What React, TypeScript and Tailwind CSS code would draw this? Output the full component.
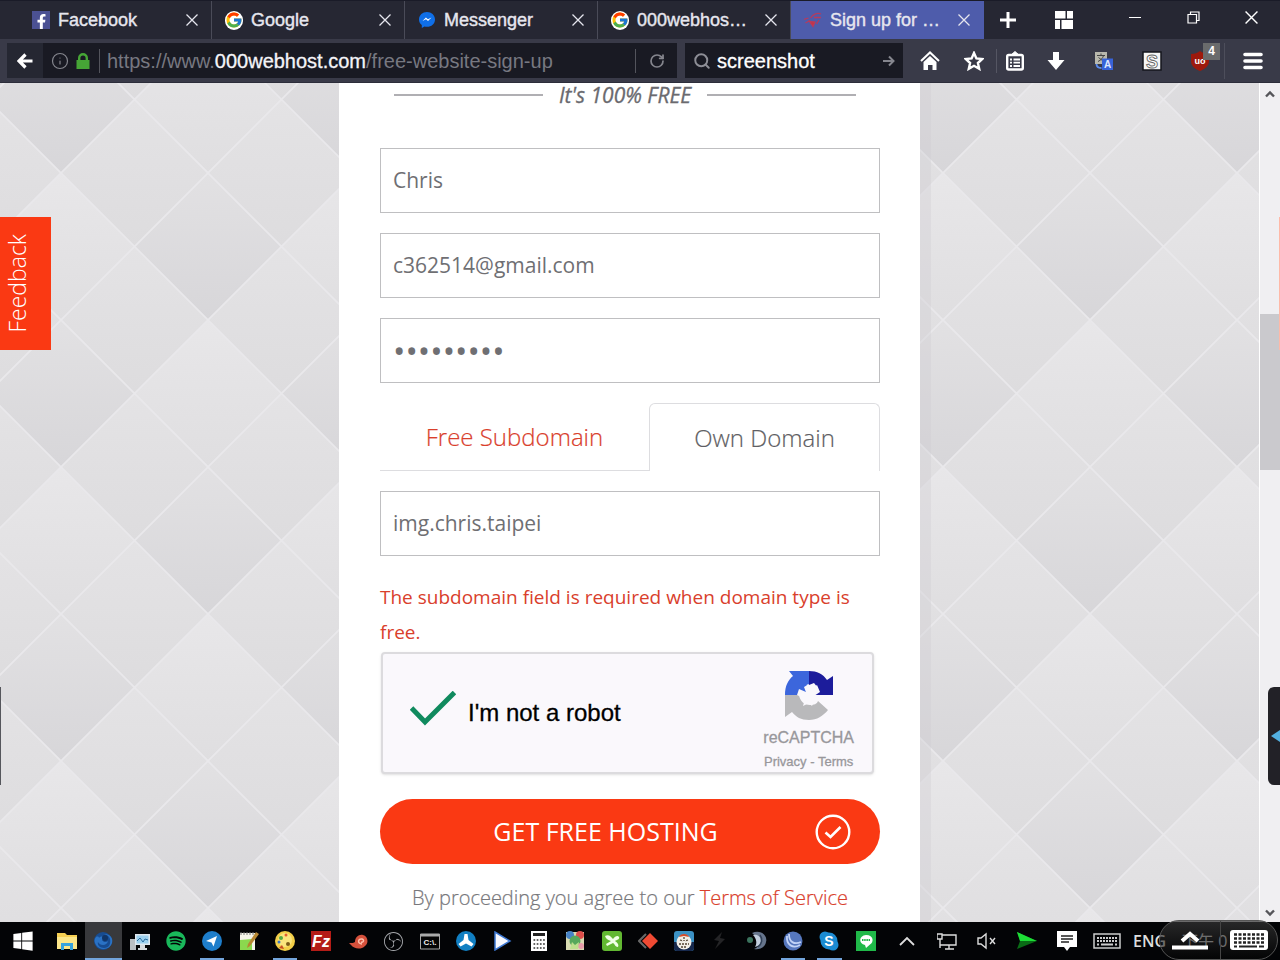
import { useState } from 'react';
import type { ReactNode } from 'react';
import { FcGoogle } from 'react-icons/fc';
import { FaFacebookF, FaSpotify, FaWindows } from 'react-icons/fa';
import { SiObsstudio } from 'react-icons/si';
import { Info, RotateCw, Search } from 'lucide-react';

type BrowserTab = { title: string; icon: ReactNode; active?: boolean };
type TaskItem = { name: string; icon: ReactNode; running?: boolean; active?: boolean };

const CloseIcon = ({ className = 'size-3' }: { className?: string }) => (
    <svg viewBox="0 0 12 12" className={className} stroke="currentColor" strokeWidth="1.3" fill="none">
        <path d="M0.5 0.5 11.5 11.5M11.5 0.5 0.5 11.5" />
    </svg>
);

const FacebookIcon = () => (
    <span className="flex size-[18px] items-end justify-center bg-[#4b5193]">
        <FaFacebookF className="size-[15px] text-white" />
    </span>
);

const GoogleIcon = () => (
    <span className="grid size-[19px] place-items-center rounded-full bg-white">
        <FcGoogle className="size-[18px]" />
    </span>
);

const MessengerIcon = () => (
    <svg viewBox="0 0 18 18" className="size-[18px]">
        <path d="M9 1C4.600 1 1 4.200 1 8.400c0 2.300 1.100 4.200 2.800 5.600V17l2.700-1.500c.8.2 1.600.3 2.500.3 4.400 0 8-3.200 8-7.400S13.400 1 9 1z" fill="#0f6fe8" />
        <path d="m4.500 10 3.400-3.500 2 1.800 3.600-1.800-3.500 3.600-2-1.800z" fill="#fff" />
    </svg>
);

const WebhostIcon = () => (
    <svg viewBox="0 0 18 18" className="size-[18px]" fill="none" stroke="#b83a5c" strokeWidth="1.300">
        <path d="M0 8.500 4.500 7M1.500 12 6 9.500M6.500 7C9 3 14 1.500 17 3M10 6.500h7M15 9l-2.500 4" />
        <path d="M5.500 10.500l5.500.5-2 4.500z" fill="#c8343f" />
    </svg>
);

const tabs: BrowserTab[] = [
    { title: 'Facebook', icon: <FacebookIcon /> },
    { title: 'Google', icon: <GoogleIcon /> },
    { title: 'Messenger', icon: <MessengerIcon /> },
    { title: '000webhos…', icon: <GoogleIcon /> },
    { title: 'Sign up for …', icon: <WebhostIcon />, active: true },
];

function TabStrip() {
    return (
        <div className="flex h-[39px] items-stretch border-t border-[#1a1b28] bg-[#262733] pl-[19px] text-[#e6e6ee]">
            {tabs.map((tab) => (
                <div
                    key={tab.title}
                    className={`flex w-[193px] shrink-0 items-center gap-2 border-r px-[13px] ${tab.active ? 'border-[#4e5cab] bg-[#4e5cab]' : 'border-[#4a4b58]'}`}
                >
                    <span className="flex w-[18px] shrink-0 justify-center">{tab.icon}</span>
                    <span className="flex-1 whitespace-nowrap text-lg [-webkit-text-stroke:0.4px_currentColor]">{tab.title}</span>
                    <button aria-label={`Close ${tab.title}`}><CloseIcon /></button>
                </div>
            ))}
            <button aria-label="New tab" className="grid w-12 place-items-center">
                <svg viewBox="0 0 16 16" className="size-4" stroke="#fff" strokeWidth="3"><path d="M8 0v16M0 8h16" /></svg>
            </button>
            <button aria-label="Tab groups" className="grid w-16 place-items-center">
                <svg viewBox="0 0 18 18" className="size-[18px]" fill="#fff">
                    <path d="M0 0h10.500v7.500H0zM12 0h6v7.500h-6zM0 9h5v9H0zM6.500 9H18v9H6.500z" />
                </svg>
            </button>
            <div className="ml-auto flex items-start text-white">
                <button aria-label="Minimize" className="grid h-8 w-[58px] place-items-center">
                    <svg viewBox="0 0 12 12" className="size-3" stroke="currentColor"><path d="M0 6.500h12" /></svg>
                </button>
                <button aria-label="Restore" className="grid h-8 w-[58px] place-items-center">
                    <svg viewBox="0 0 13 13" className="size-[13px]" fill="none" stroke="currentColor" strokeWidth="1.200">
                        <path d="M1 3.500h8.500V12H1zM3.500 3.500V1H12v8.500H9.500" />
                    </svg>
                </button>
                <button aria-label="Close window" className="grid h-8 w-[58px] place-items-center"><CloseIcon className="size-[13px]" /></button>
            </div>
        </div>
    );
}

function Toolbar() {
    return (
        <div className="flex h-11 items-center border-b border-[#2c2d3a] bg-[#393a48] pl-[7px] text-white">
            <div className="flex h-[35px] flex-1 items-center bg-[#191a23]">
                <button aria-label="Back" className="grid h-full w-9 place-items-center bg-[#252732]">
                    <svg viewBox="0 0 16 16" className="size-4" fill="none" stroke="#fff" strokeWidth="3.200"><path d="M15.500 8H3M8.500 1.500 2 8l6.500 6.500" /></svg>
                </button>
                <Info className="ml-2 size-[18px] text-[#85868e]" strokeWidth={1.6} />
                <svg viewBox="0 0 14 16" className="ml-[7px] h-4 w-[14px]">
                    <path d="M0.500 7h13v9h-13z" fill="#46a536" />
                    <path d="M3.200 8V5a3.800 3.800 0 0 1 7.600 0v3" fill="none" stroke="#46a536" strokeWidth="2.400" />
                </svg>
                <span className="ml-[9px] h-6 w-px bg-[#53545c]" />
                <div className="min-w-0 flex-1 overflow-hidden whitespace-nowrap pl-[7px] text-xl text-[#777881]">
                    https://www.<span className="text-[#f4f4f8] [-webkit-text-stroke:0.3px_currentColor]">000webhost.com</span>/free-website-sign-up
                </div>
                <span className="h-6 w-px bg-[#53545c]" />
                <button aria-label="Reload" className="grid h-full w-[41px] place-items-center text-[#85868e]">
                    <RotateCw className="size-4" strokeWidth={2.6} />
                </button>
            </div>
            <label className="ml-2 flex h-[35px] w-[218px] items-center bg-[#191a23] px-2">
                <Search className="size-[18px] shrink-0 text-[#8d8e96]" strokeWidth={2.6} />
                <input aria-label="Search" defaultValue="screenshot" className="ml-1.5 min-w-0 flex-1 bg-transparent text-xl outline-none [-webkit-text-stroke:0.3px_currentColor]" />
                <svg viewBox="0 0 12 12" className="size-3" fill="none" stroke="#85868e" strokeWidth="2"><path d="M0 6h10M6 1.500 10.500 6 6 10.500" /></svg>
            </label>
            <button aria-label="Home" className="ml-[5px] grid w-11 place-items-center">
                <svg viewBox="0 0 20 20" className="size-5">
                    <path d="M1 10 10 1.500 19 10" fill="none" stroke="#fff" strokeWidth="2" />
                    <path d="M3.500 11 10 5l6.500 6v8h-4v-5h-4.500v5h-4.500z" fill="#fff" />
                </svg>
            </button>
            <button aria-label="Bookmark" className="grid w-11 place-items-center">
                <svg viewBox="0 0 20 20" className="size-5" fill="none" stroke="#fff" strokeWidth="2.400">
                    <path d="m10 2 2.400 5.400 5.900.6-4.400 4 1.300 5.800L10 14.800l-5.200 3L6.100 12 1.700 8l5.900-.6z" />
                </svg>
            </button>
            <button aria-label="Bookmarks list" className="grid h-6 w-9 place-items-center border-l border-[#555663]">
                <svg viewBox="0 0 18 20" className="h-5 w-[18px]" fill="none" stroke="#fff">
                    <rect x="1.200" y="4" width="15.600" height="14.500" rx="1.500" strokeWidth="2.400" />
                    <path d="M5 4 9 0.500 13 4z" fill="#fff" />
                    <path d="M4 8.500h2M7.500 8.500H14M4 11.700h2M7.500 11.700H14M4 15h2M7.500 15H14" strokeWidth="1.800" />
                </svg>
            </button>
            <button aria-label="Downloads" className="grid w-12 place-items-center">
                <svg viewBox="0 0 18 18" className="size-[18px]" fill="#fff"><path d="M6 0h6v8h5.500L9 18 .5 8H6z" /></svg>
            </button>
            <button aria-label="Translate" className="grid w-12 place-items-center">
                <svg viewBox="0 0 18 18" className="size-[18px]">
                    <path d="M0 0h12v12H0z" fill="#b9b8ad" />
                    <path d="M2 3.500h8M6 1.500v2M3 9.500C6 8 8 6 8.500 3.500M3.500 5.500 8 9" stroke="#444" fill="none" />
                    <path d="M7 6.500h11V18H7z" fill="#3863d8" />
                    <path d="M1.500 12c0 3 2 4 5 4" stroke="#5b8cf0" strokeWidth="1.800" fill="none" />
                    <text x="12.500" y="16" fontSize="10" fontWeight="700" textAnchor="middle" fill="#dfe8ff">A</text>
                </svg>
            </button>
            <button aria-label="Stylish" className="grid w-12 place-items-center">
                <svg viewBox="0 0 20 20" className="size-5">
                    <path d="M1 1h18v18H1z" fill="#f6f6f6" stroke="#15161c" strokeWidth="1.500" />
                    <text x="10" y="16.500" fontSize="18" fontWeight="700" textAnchor="middle" fill="#fff" stroke="#666" strokeWidth="0.900">S</text>
                </svg>
            </button>
            <button aria-label="uBlock" className="relative grid w-12 place-items-center">
                <svg viewBox="0 0 18 20" className="h-5 w-[18px]">
                    <path d="M9 0c2.500 2 5 2.700 9 3v7c0 5-4 8-9 10-5-2-9-5-9-10V3c4-.3 6.500-1 9-3z" fill="#9d190c" />
                    <text x="9" y="13" fontSize="9" fontWeight="700" textAnchor="middle" fill="#fff">uo</text>
                </svg>
                <span className="absolute -top-2 right-1 grid size-[17px] place-items-center bg-[#6a6b6c] text-xs font-bold leading-none">4</span>
            </button>
            <button aria-label="Menu" className="grid h-9 w-14 place-items-center border-l border-[#4d4e5b]">
                <svg viewBox="0 0 20 18" className="h-[18px] w-5" stroke="#fff" strokeWidth="3.600" strokeLinecap="round"><path d="M2 2.500h16M2 9h16M2 15.500h16" /></svg>
            </button>
        </div>
    );
}

// Quilted diamond texture behind the form
const diamond = (x: number, y: number) => `M${x} ${y}l73.500 73.500-73.500 73.500-73.500-73.500z`;
const brightTops = [[0, 0], [294, 0], [147, 147], [147, -147]];
const darkTops = [[147, 0], [0, 147], [294, 147], [0, -147], [294, -147]];
const midTops = [[73.5, 73.5], [220.5, 73.5], [73.5, 220.5], [220.5, 220.5], [73.5, -73.5], [220.5, -73.5]];

function Texture() {
    return (
        <svg aria-hidden="true" className="absolute inset-0 size-full">
            <defs>
                <linearGradient id="bright" x1="0" y1="0" x2="0" y2="1">
                    <stop offset="0" stopColor="#e8e7e9" /><stop offset="1" stopColor="#dfdee0" />
                </linearGradient>
                <linearGradient id="mid" x1="0" y1="0" x2="0" y2="1">
                    <stop offset="0" stopColor="#e4e3e5" /><stop offset="1" stopColor="#dddcde" />
                </linearGradient>
                <linearGradient id="dark" x1="0" y1="0" x2="0" y2="1">
                    <stop offset="0" stopColor="#e2e1e3" /><stop offset="1" stopColor="#d7d6d9" />
                </linearGradient>
                <pattern id="quilt" width="294" height="294" patternUnits="userSpaceOnUse" patternTransform="translate(61 90)">
                    {brightTops.map(([x, y]) => <path key={`${x},${y}`} d={diamond(x, y)} fill="url(#bright)" />)}
                    {midTops.map(([x, y]) => <path key={`${x},${y}`} d={diamond(x, y)} fill="url(#mid)" />)}
                    {darkTops.map(([x, y]) => <path key={`${x},${y}`} d={diamond(x, y)} fill="url(#dark)" />)}
                    <path d="M0 0l294 294M147 0l147 147M0 147l147 147M294 0L0 294M147 0L0 147M294 147L147 294" stroke="#e9e8eb" strokeWidth="1.800" />
                </pattern>
            </defs>
            <rect width="100%" height="100%" fill="url(#quilt)" />
        </svg>
    );
}

const fieldBox = 'h-[65px] w-full border border-[#bfbfc1] bg-white px-3 text-[#6f6f73] outline-none';
const fieldClass = `${fieldBox} pb-0.5 text-[21px]`;

const Recaptcha = () => (
    <div className="mx-px mt-0.5 flex h-[122px] w-[493px] max-w-full items-center rounded-[4px] border-2 border-[#dcdbde] bg-[#faf8fc] pl-[27px] pr-[18px] font-['Liberation_Sans',sans-serif] shadow-sm">
        <label className="flex flex-1 items-center gap-3 text-2xl text-black">
            <span className="relative -mt-2 h-9 w-[46px]">
                <input type="checkbox" defaultChecked className="size-full appearance-none" />
                <svg viewBox="0 0 46 36" className="pointer-events-none absolute inset-0" fill="none" stroke="#108a5e" strokeWidth="5">
                    <path d="M1.500 17 15 31 44.500 1.500" />
                </svg>
            </span>
            <span className="[-webkit-text-stroke:0.3px_currentColor]">I'm not a robot</span>
        </label>
        <div className="flex flex-col items-center pt-4 text-[#98979b] [-webkit-text-stroke:0.3px_currentColor]">
            <svg viewBox="0 0 50 50" className="size-[50px]">
                <path d="M25 1v13l-5 3 3 8H1C1 16 4 10 9 6L5 1z" fill="#3c66dc" />
                <path d="M25 1c8 0 14 3 18 9l6-4v19H29l5-7-4-5-5 2z" fill="#1c1c9b" />
                <path d="M1 25h14c1 6 5 10 11 10 4 0 7-1 8-4l10 9c-5 6-11 10-19 10-8 0-13-3-17-8l-7 5z" fill="#b9b9bb" />
                <path d="m13 25 2-6 7 3 1-8 5 5 5-4 3 7-6 4 5 5h-5l-2 5-3-3-6 3 2-7-4-2z" fill="#faf8fc" />
            </svg>
            <span className="mt-2 text-base leading-5">reCAPTCHA</span>
            <span className="mt-1 text-[13px] leading-5"><a href="#privacy">Privacy</a> - <a href="#terms">Terms</a></span>
        </div>
    </div>
);

function SignUpForm() {
    const [domainType, setDomainType] = useState('own');
    return (
        <form className="relative w-[581px] shrink-0 bg-white pl-[41px] pr-10 font-['Open_Sans',sans-serif] shadow-[11px_0_0_rgba(205,203,208,0.35)]" onSubmit={(e) => e.preventDefault()}>
            <div className="flex items-center gap-4 pl-3.5 pr-6 text-[21px] italic leading-6 text-[#6a6a6f]">
                <span className="h-0.5 flex-1 bg-[#b0afb3]" />
                <span className="[-webkit-text-stroke:0.3px_currentColor]">It's 100% FREE</span>
                <span className="h-0.5 flex-1 bg-[#b0afb3]" />
            </div>
            <div className="mt-[41px] flex flex-col gap-5">
                <input aria-label="Name" defaultValue="Chris" className={fieldClass} />
                <input aria-label="Email" type="email" defaultValue="c362514@gmail.com" className={fieldClass} />
                <input aria-label="Password" type="password" defaultValue="password1" className={`${fieldBox} text-[33px]`} />
                <div className="flex h-[68px] text-2xl font-light [-webkit-text-stroke:0.2px_currentColor]">
                    <button type="button" onClick={() => setDomainType('free')} className="w-[269px] border-b border-[#dddde0] text-[#d9402c]">Free Subdomain</button>
                    <button type="button" onClick={() => setDomainType('own')} className="flex-1 rounded-t-md border border-b-0 border-[#dddde0] text-[#5f5f64]">Own Domain</button>
                </div>
                <input key={domainType} aria-label="Domain" defaultValue="img.chris.taipei" className={fieldClass} />
            </div>
            <p className="mt-6 text-[19px] leading-[35px] text-[#d9402c]">The subdomain field is required when domain type is free.</p>
            <Recaptcha />
            <button type="submit" className="mt-[25px] flex h-[65px] w-full items-center rounded-full bg-[#fa3913] pl-4 pr-[29px] text-[25px] text-white">
                <span className="flex-1">GET FREE HOSTING</span>
                <svg viewBox="0 0 36 36" className="size-9" fill="none" stroke="#fff">
                    <circle cx="18" cy="18" r="16.300" strokeWidth="2.400" />
                    <path d="m10.500 18.500 5 4.500 10-10" strokeWidth="2.600" />
                </svg>
            </button>
            <p className="mt-4 whitespace-nowrap text-center text-[20px] font-light leading-9 text-[#77777b] [-webkit-text-stroke:0.2px_currentColor]">
                By proceeding you agree to our <a href="#tos" className="text-[#d9402c]">Terms of Service</a>
            </p>
        </form>
    );
}

const I = ({ children }: { children: ReactNode }) => <svg viewBox="0 0 20 20" className="size-5">{children}</svg>;

const taskItems: TaskItem[] = [
    { name: 'File Explorer', icon: <I><path d="M0 2h8l2 2h10v14H0z" fill="#f5cf52" /><path d="M0 6h20v12H0z" fill="#fbe689" /><path d="M4 19v-7h12v7h-3v-4H7v4z" fill="#36a3dd" /></I> },
    { name: 'Firefox', active: true, icon: <I><circle cx="10" cy="10" r="9" fill="#174c91" /><path d="M3 6c2-1 3 0 3 1 2-2 5-2 6 1l-3 1c1 2 4 3 6 1-1 5-8 5-10 1-1 3 2 6 6 6 5 0 7-4 6-9-1-3-3-4-6-5 8 0 9 6 8 9-2 7-12 8-16 2C1 11 1 8 3 6z" fill="#2a72c4" /><circle cx="12" cy="7" r="3" fill="#103567" /></I> },
    { name: 'System Monitor', icon: <I><path d="M0 8h6v11H0z" fill="#b9bfc3" /><path d="M5 3h15v11H5z" fill="#dfe8ee" /><path d="M6.500 4.500h12v8h-12z" fill="#9bd0ee" /><path d="m7 10 3-3 3 4 2-3 3 1" fill="none" stroke="#286b9e" /><path d="M10 14h5v3h2v2H8v-2h2z" fill="#d5dadd" /></I> },
    { name: 'Spotify', icon: <FaSpotify className="size-5 text-[#19b85a]" /> },
    { name: 'Telegram', running: true, icon: <I><circle cx="10" cy="10" r="10" fill="#1e7ecb" /><path d="m4 10 11-5-3.500 10.500-2-4z" fill="#fff" /></I> },
    { name: 'Notepad++', icon: <I><path d="M1 2h15v17H1z" fill="#f5f5e9" /><path d="M1 9l12-1v11H1z" fill="#8bd84e" /><path d="M2 1v3M5 1v3M8 1v3M11 1v3M14 1v3" stroke="#777" /><path d="m17 1 3 2-9 12-3 2 1-4z" fill="#b68732" /></I> },
    { name: 'Paint', running: true, icon: <I><circle cx="10" cy="10" r="10" fill="#f3cf48" /><circle cx="10" cy="9" r="7" fill="#fae57d" /><circle cx="6" cy="7" r="2" fill="#52a943" /><circle cx="11" cy="4" r="1.500" fill="#e15e2f" /><circle cx="4" cy="11" r="1.500" fill="#3d77c2" /><circle cx="13" cy="13" r="2" fill="#7b5b18" /><path d="m4 17 3-3 2 4" fill="#c84b25" /></I> },
    { name: 'FileZilla', icon: <I><path d="M0 0h20v20H0z" fill="#b41c17" /><text x="10" y="16" fontSize="16" fontWeight="700" fontStyle="italic" textAnchor="middle" fill="#fff">Fz</text></I> },
    { name: 'Snail', icon: <I><path d="M1 12c3 0 5 0 6-1 0-5 4-8 8-7 5 1 6 8 2 11-4 4-11 3-14-1z" fill="#d6513c" /><path d="M14 13c-5 0-4-6 0-5 3 1 1 4-1 3" fill="none" stroke="#ffc0ad" strokeWidth="1.500" /></I> },
    { name: 'OBS Studio', icon: <SiObsstudio className="size-[19px] text-[#a6a8ac]" /> },
    { name: 'Command Prompt', icon: <I><path d="M.5 3h19v15H.5z" fill="#050505" stroke="#a8a8a8" /><path d="M.5 3h19v2.500H.5z" fill="#aaa" /><text x="10" y="14" fontSize="8" fontWeight="700" textAnchor="middle" fill="#eee">C:\.</text></I> },
    { name: 'Steering', icon: <I><circle cx="10" cy="10" r="10" fill="#117fc2" /><path d="M8.500 3h3l1 6 5 4-2 2.500-5.500-3-5.500 3-2-2.500 5-4z" fill="#fff" /></I> },
    { name: 'Media Player', icon: <I><path d="M2 1v18l15-9z" fill="#f7f9ff" stroke="#3c77d2" strokeWidth="1.500" /></I> },
    { name: 'Calculator', icon: <I><path d="M2 0h16v20H2z" fill="#fff" /><path d="M4 2h12v3H4z" fill="#222" /><path d="M4.500 9h12M4.500 13h12M4.500 17h12" stroke="#333" strokeWidth="1.500" strokeDasharray="1.700 1.500" /></I> },
    { name: 'Photos', icon: <I><path d="M1 1h18v18H1z" fill="#d8dbb1" /><circle cx="5" cy="4" r="4" fill="#4783c6" /><circle cx="15" cy="4" r="4" fill="#dc4f4b" /><circle cx="10" cy="10" r="5.500" fill="#57a85c" /><circle cx="16" cy="15" r="3" fill="#e69ca9" /><path d="m5 18 2-7 3 3 4-3-1 7" fill="#bfe08e" /></I> },
    { name: 'Screen Pen', icon: <I><rect width="20" height="20" rx="3" fill="#62b832" /><path d="M3 5c4-2 6 1 8 3 2-3 5-4 6-2 1 2-2 3-4 4 3 2 4 4 3 6-3 0-3-3-5-4l-6 3-1-2 5-3C6 9 4 8 3 5z" fill="#f1ffe7" /></I> },
    { name: 'Diamond', icon: <I><path d="M8 3 1 10l7 7" fill="none" stroke="#686868" strokeWidth="2" /><path d="m12 2 8 8-8 8-8-8z" fill="#f04a33" /></I> },
    { name: 'Game', icon: <I><rect width="20" height="20" rx="3" fill="#3c92c4" /><path d="M0 11h20v6a3 3 0 0 1-3 3H3a3 3 0 0 1-3-3z" fill="#17294d" /><circle cx="10" cy="11" r="7.500" fill="#f3efe7" /><path d="M5 6c1-4 9-4 10 0l-5-1z" fill="#d54b2a" /><path d="M6 9l3 1m5-1-3 1M5 13h10M7 16h6M10 6v4" stroke="#543" strokeWidth="1.300" strokeDasharray="2 1" /></I> },
    { name: 'Lightning', icon: <I><path d="m12 1-8 8 5 1-4 8 10-10-5-1z" fill="#242426" /></I> },
    { name: 'Teamspeak Client', icon: <I><path d="M5 2c9-4 16 3 14 9-1 6-7 8-12 7 7-3 7-10-2-16z" fill="#66758c" /><path d="M6 4c9-2 11 10 2 12 2-3 2-8-2-12z" fill="#c2cede" /><path d="M13 4c3 4 2 9-2 12" stroke="#324259" strokeWidth="1.500" fill="none" /><circle cx="3" cy="9" r="3" fill="#3b735d" /></I> },
    { name: 'Globe', running: true, icon: <I><circle cx="10" cy="10" r="9.500" fill="#5677bd" /><path d="M4 5c-1 9 6 13 13 9M6 3c0 8 5 11 12 8" stroke="#c2d3f7" strokeWidth="1.800" fill="none" /></I> },
    { name: 'Skype', running: true, icon: <I><circle cx="6" cy="6" r="5.500" fill="#1b8bd2" /><circle cx="14" cy="14" r="5.500" fill="#1b8bd2" /><circle cx="10" cy="10" r="8.500" fill="#1b8bd2" /><text x="10" y="15" fontSize="14" fontWeight="700" textAnchor="middle" fill="#fff">S</text></I> },
    { name: 'LINE', icon: <I><path d="M0 0h20v20H0z" fill="#20b949" /><path d="M10 4c8 0 8 7.500 4 9.500L10 17l-1-3C2.500 13 2.500 4.500 10 4z" fill="#fff" /><path d="M6 9h8" stroke="#20b949" strokeWidth="2.200" strokeDasharray="1.500 0.700" fill="none" /></I> },
];

const trayIcons: TaskItem[] = [
    { name: 'Show hidden icons', icon: <I><path d="m3 14 7-7 7 7" fill="none" stroke="#ddd" strokeWidth="1.800" /></I> },
    { name: 'Network', icon: <I><path d="M5 4h14v10H3V9M8 18h9M12 14v4M0 3h5v5H0zM3 8v9" fill="none" stroke="#ddd" strokeWidth="1.400" /></I> },
    { name: 'Volume', icon: <I><path d="M1 7h3l5-4v14l-5-4H1zM13 7l5 6M18 7l-5 6" fill="none" stroke="#ddd" strokeWidth="1.400" /></I> },
    { name: 'Flag', icon: <I><path d="m0 1 20 9-20 8 3-8z" fill="#0a6c16" /><path d="m0 1 20 9H3z" fill="#1ddd36" /></I> },
    { name: 'Notifications', icon: <I><path d="M0 0h20v16h-7l-3 4-3-4H0z" fill="#fff" /><path d="M4 5h12M4 8h12M4 11h8" stroke="#222" strokeWidth="1.300" /></I> },
    { name: 'Keyboard', icon: <svg viewBox="0 0 28 18" className="h-[18px] w-7" fill="none" stroke="#ccc"><path d="M1 2h26v14H1z" strokeWidth="1.500" /><path d="M4 6h20M4 9h20" strokeWidth="2" strokeDasharray="2 1" /><path d="M4 12.500h2M8 12.500h12M22 12.500h2" strokeWidth="2" /></svg> },
];

function Taskbar() {
    return (
        <footer className="relative flex h-[38px] items-stretch bg-[#030406]">
            <button aria-label="Start" className="grid w-[49px] place-items-center pr-1 text-white"><FaWindows className="size-[22px]" /></button>
            <nav aria-label="Applications" className="flex w-[835px] shrink-0">
                {taskItems.map((item) => (
                    <button key={item.name} aria-label={item.name} className={`relative grid flex-1 place-items-center ${item.active ? 'bg-[#38393c]' : ''}`}>
                        {item.icon}
                        {item.active && <span className="absolute inset-x-0 bottom-0 h-0.5 bg-[#73a5dc]" />}
                        {item.running && <span className="absolute inset-x-1.5 bottom-0 h-0.5 bg-[#73a5dc]" />}
                    </button>
                ))}
            </nav>
            <div className="ml-[3px] flex">
                {trayIcons.map((item) => (
                    <button key={item.name} aria-label={item.name} className="grid w-10 place-items-center">{item.icon}</button>
                ))}
            </div>
            <span className="ml-1.5 flex items-center gap-4 whitespace-nowrap font-['Open_Sans','Noto_Sans_CJK_TC',sans-serif] text-base font-semibold text-[#ddd]">
                ENG <span className="font-normal text-[#e0e0e0]">下午 0</span>
            </span>
            <div className="absolute -top-0.5 right-0.5 flex h-10 w-[119px] items-center rounded-full border border-[#555] bg-linear-to-b from-[#383838]/70 to-[#060606]/50">
                <button aria-label="Open panel" className="grid h-full w-[61px] place-items-center border-r border-[#444]">
                    <svg viewBox="0 0 36 20" className="h-5 w-9" fill="none" stroke="#fff" strokeWidth="4"><path d="m10 11 8-7 8 7M0 17.500h36" /></svg>
                </button>
                <button aria-label="Touch keyboard" className="grid flex-1 place-items-center">
                    <svg viewBox="0 0 38 20" className="h-5 w-[38px]">
                        <rect width="38" height="20" rx="3" fill="#fff" />
                        <path d="M4 4.500h30M4 8.500h30M4 12.500h30" stroke="#222" strokeWidth="2.600" strokeDasharray="3 1.500" />
                        <path d="M4 16.500h3M9 16.500h18M29 16.500h5" stroke="#222" strokeWidth="2.200" />
                    </svg>
                </button>
            </div>
        </footer>
    );
}

export default function App() {
    return (
        <div className="flex min-h-screen flex-col overflow-hidden font-['Liberation_Sans',Arial,sans-serif]">
            <header>
                <TabStrip />
                <Toolbar />
            </header>
            <main className="relative flex flex-1 justify-between">
                <div className="relative flex flex-1 justify-center">
                    <Texture />
                    <SignUpForm />
                    <button className="absolute left-0 top-[134px] flex h-[133px] w-[51px] items-center justify-center bg-[#fa3913] pr-4 font-['Open_Sans',sans-serif] text-[23px] font-light text-white">
                        <span className="rotate-180 [writing-mode:vertical-rl]">Feedback</span>
                    </button>
                </div>
                <div className="relative flex w-[21px] flex-col items-center border-l border-white bg-[#f0eff2] text-[#55555a]">
                    <svg viewBox="0 0 10 10" className="mt-1.5 size-2.5" fill="none" stroke="currentColor" strokeWidth="2.400"><path d="m1 7.500 4-4 4 4" /></svg>
                    <div className="mt-[215px] h-[156px] w-full bg-[#cac9cd]" />
                    <svg viewBox="0 0 10 10" className="mb-1 mt-auto size-2.5" fill="none" stroke="currentColor" strokeWidth="2.400"><path d="m1 2.500 4 4 4-4" /></svg>
                </div>
                <span className="absolute right-0 top-[134px] h-[133px] w-px bg-[#ffb9a8]" />
                <span className="absolute left-0 top-[604px] h-[98px] w-px bg-[#55565c]" />
                <button aria-label="Open side panel" className="absolute right-0 top-[604px] grid h-[98px] w-3 place-items-end rounded-l-md bg-[#222127]">
                    <svg viewBox="0 0 9 12" className="my-auto h-3 w-[9px]"><path d="M0 6 9 0v12z" fill="#52afe0" /></svg>
                </button>
            </main>
            <Taskbar />
        </div>
    );
}
